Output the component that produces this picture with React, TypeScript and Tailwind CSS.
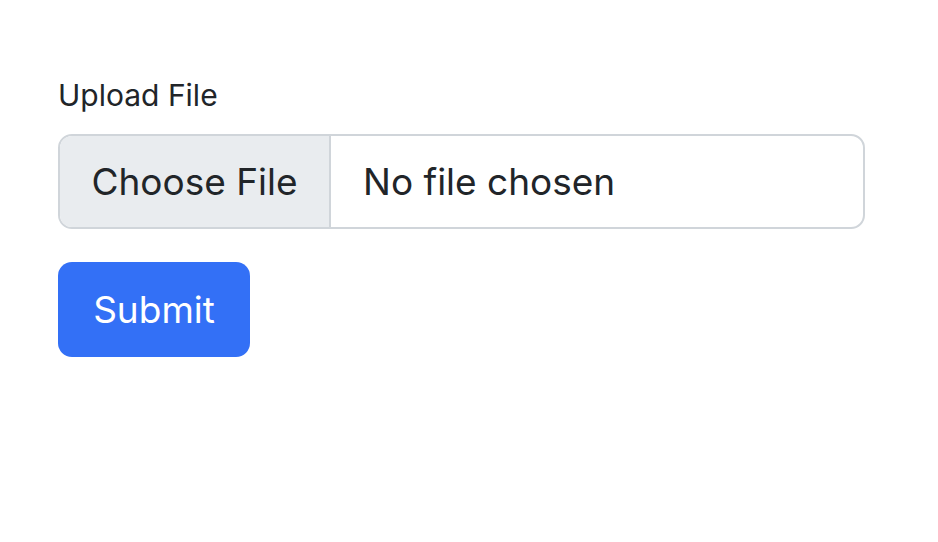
import React from "react";

export default function App() {
  return (
    <div className="min-h-screen bg-white">
      <div className="flex flex-col pl-[58px] pt-[74px] w-[865px]" style={{ fontFamily: "Inter, 'Noto Sans', sans-serif" }}>
        <label className="text-[30px] leading-[42px] text-[#212529]">Upload File</label>
        <div className="mt-[18px] flex h-[95px] w-[807px] rounded-[14px] border-2 border-[#d0d5da] overflow-hidden">
          <div className="flex w-[271px] items-center justify-center bg-[#e9ecef] border-r-2 border-[#d0d5da] text-[37px] text-[#212529]">
            Choose File
          </div>
          <div className="flex items-center pl-[32px] text-[37px] text-[#212529]">No file chosen</div>
        </div>
        <button className="mt-[33px] flex h-[95px] w-[192px] items-center justify-center rounded-[14px] bg-[#3370f6] text-[37px] text-white">
          Submit
        </button>
      </div>
    </div>
  );
}
